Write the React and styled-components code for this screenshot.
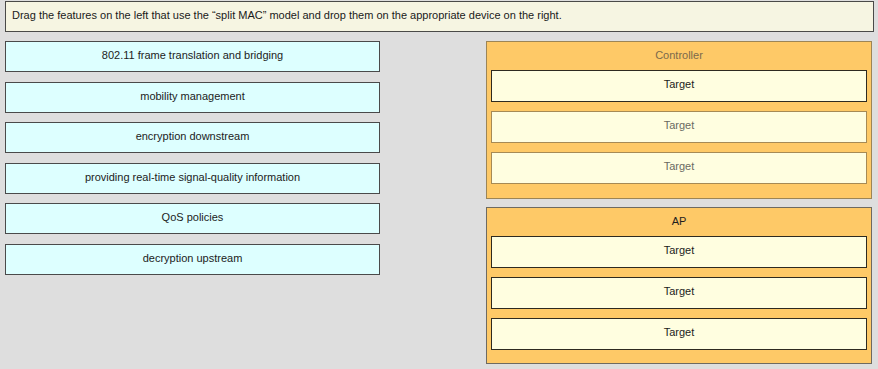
import React from 'react';
import styled, { createGlobalStyle } from 'styled-components';

const GlobalStyle = createGlobalStyle`
  html, body {
    margin: 0;
    padding: 0;
    background: #dedede;
    font-family: "Liberation Sans", Arial, sans-serif;
  }
`;

const Page = styled.div`
  width: 878px;
  height: 369px;
  box-sizing: border-box;
  padding: 1px 5px 0 5px;
  display: flex;
  flex-direction: column;
  gap: 9px;
`;

const Instructions = styled.div`
  box-sizing: border-box;
  height: 31px;
  width: 869px;
  background: #f6f5e2;
  border: 1px solid #4a4a48;
  display: flex;
  align-items: center;
  padding: 0 0 3px 6px;
  font-size: 11px;
  color: #1a1a1a;
`;

const Board = styled.div`
  display: flex;
  justify-content: space-between;
  width: 867px;
`;

const Features = styled.div`
  display: flex;
  flex-direction: column;
  gap: 9.6px;
  width: 375px;
`;

const Feature = styled.div`
  box-sizing: border-box;
  height: 31px;
  background: #ddffff;
  border: 1px solid #4a4a4a;
  display: flex;
  align-items: center;
  justify-content: center;
  padding-bottom: 3px;
  font-size: 11px;
  color: #1c1c1c;
`;

const Devices = styled.div`
  display: flex;
  flex-direction: column;
  gap: 8px;
  width: 386px;
`;

const Device = styled.div`
  box-sizing: border-box;
  height: ${({ $h }) => $h}px;
  background: #fec967;
  border: 1px solid ${({ $muted }) => ($muted ? '#9c8556' : '#6e6a60')};
  padding: 0 4px;
  display: flex;
  flex-direction: column;
`;

const DeviceTitle = styled.div`
  height: 28px;
  display: flex;
  align-items: center;
  justify-content: center;
  padding-bottom: 2px;
  box-sizing: border-box;
  font-size: 11px;
  color: ${({ $muted }) => ($muted ? '#7b6a4c' : '#1e1e1e')};
`;

const Targets = styled.div`
  display: flex;
  flex-direction: column;
  gap: 9.5px;
`;

const Target = styled.div`
  box-sizing: border-box;
  height: 31.5px;
  background: #fffee0;
  border: 1px solid ${({ $muted }) => ($muted ? '#a68a55' : '#2e2a20')};
  display: flex;
  align-items: center;
  justify-content: center;
  padding-bottom: 4px;
  font-size: 11px;
  color: ${({ $muted }) => ($muted ? '#6a6a62' : '#1c1c1c')};
`;

const features = [
  '802.11 frame translation and bridging',
  'mobility management',
  'encryption downstream',
  'providing real-time signal-quality information',
  'QoS policies',
  'decryption upstream',
];

export default function App() {
  return (
    <>
      <GlobalStyle />
      <Page>
        <Instructions>
          Drag the features on the left that use the “split MAC” model and drop them on the appropriate device on the right.
        </Instructions>
        <Board>
          <Features>
            {features.map((f) => (
              <Feature key={f}>{f}</Feature>
            ))}
          </Features>
          <Devices>
            <Device $h={158} $muted>
              <DeviceTitle $muted>Controller</DeviceTitle>
              <Targets>
                <Target>Target</Target>
                <Target $muted>Target</Target>
                <Target $muted>Target</Target>
              </Targets>
            </Device>
            <Device $h={157}>
              <DeviceTitle>AP</DeviceTitle>
              <Targets>
                <Target>Target</Target>
                <Target>Target</Target>
                <Target>Target</Target>
              </Targets>
            </Device>
          </Devices>
        </Board>
      </Page>
    </>
  );
}
